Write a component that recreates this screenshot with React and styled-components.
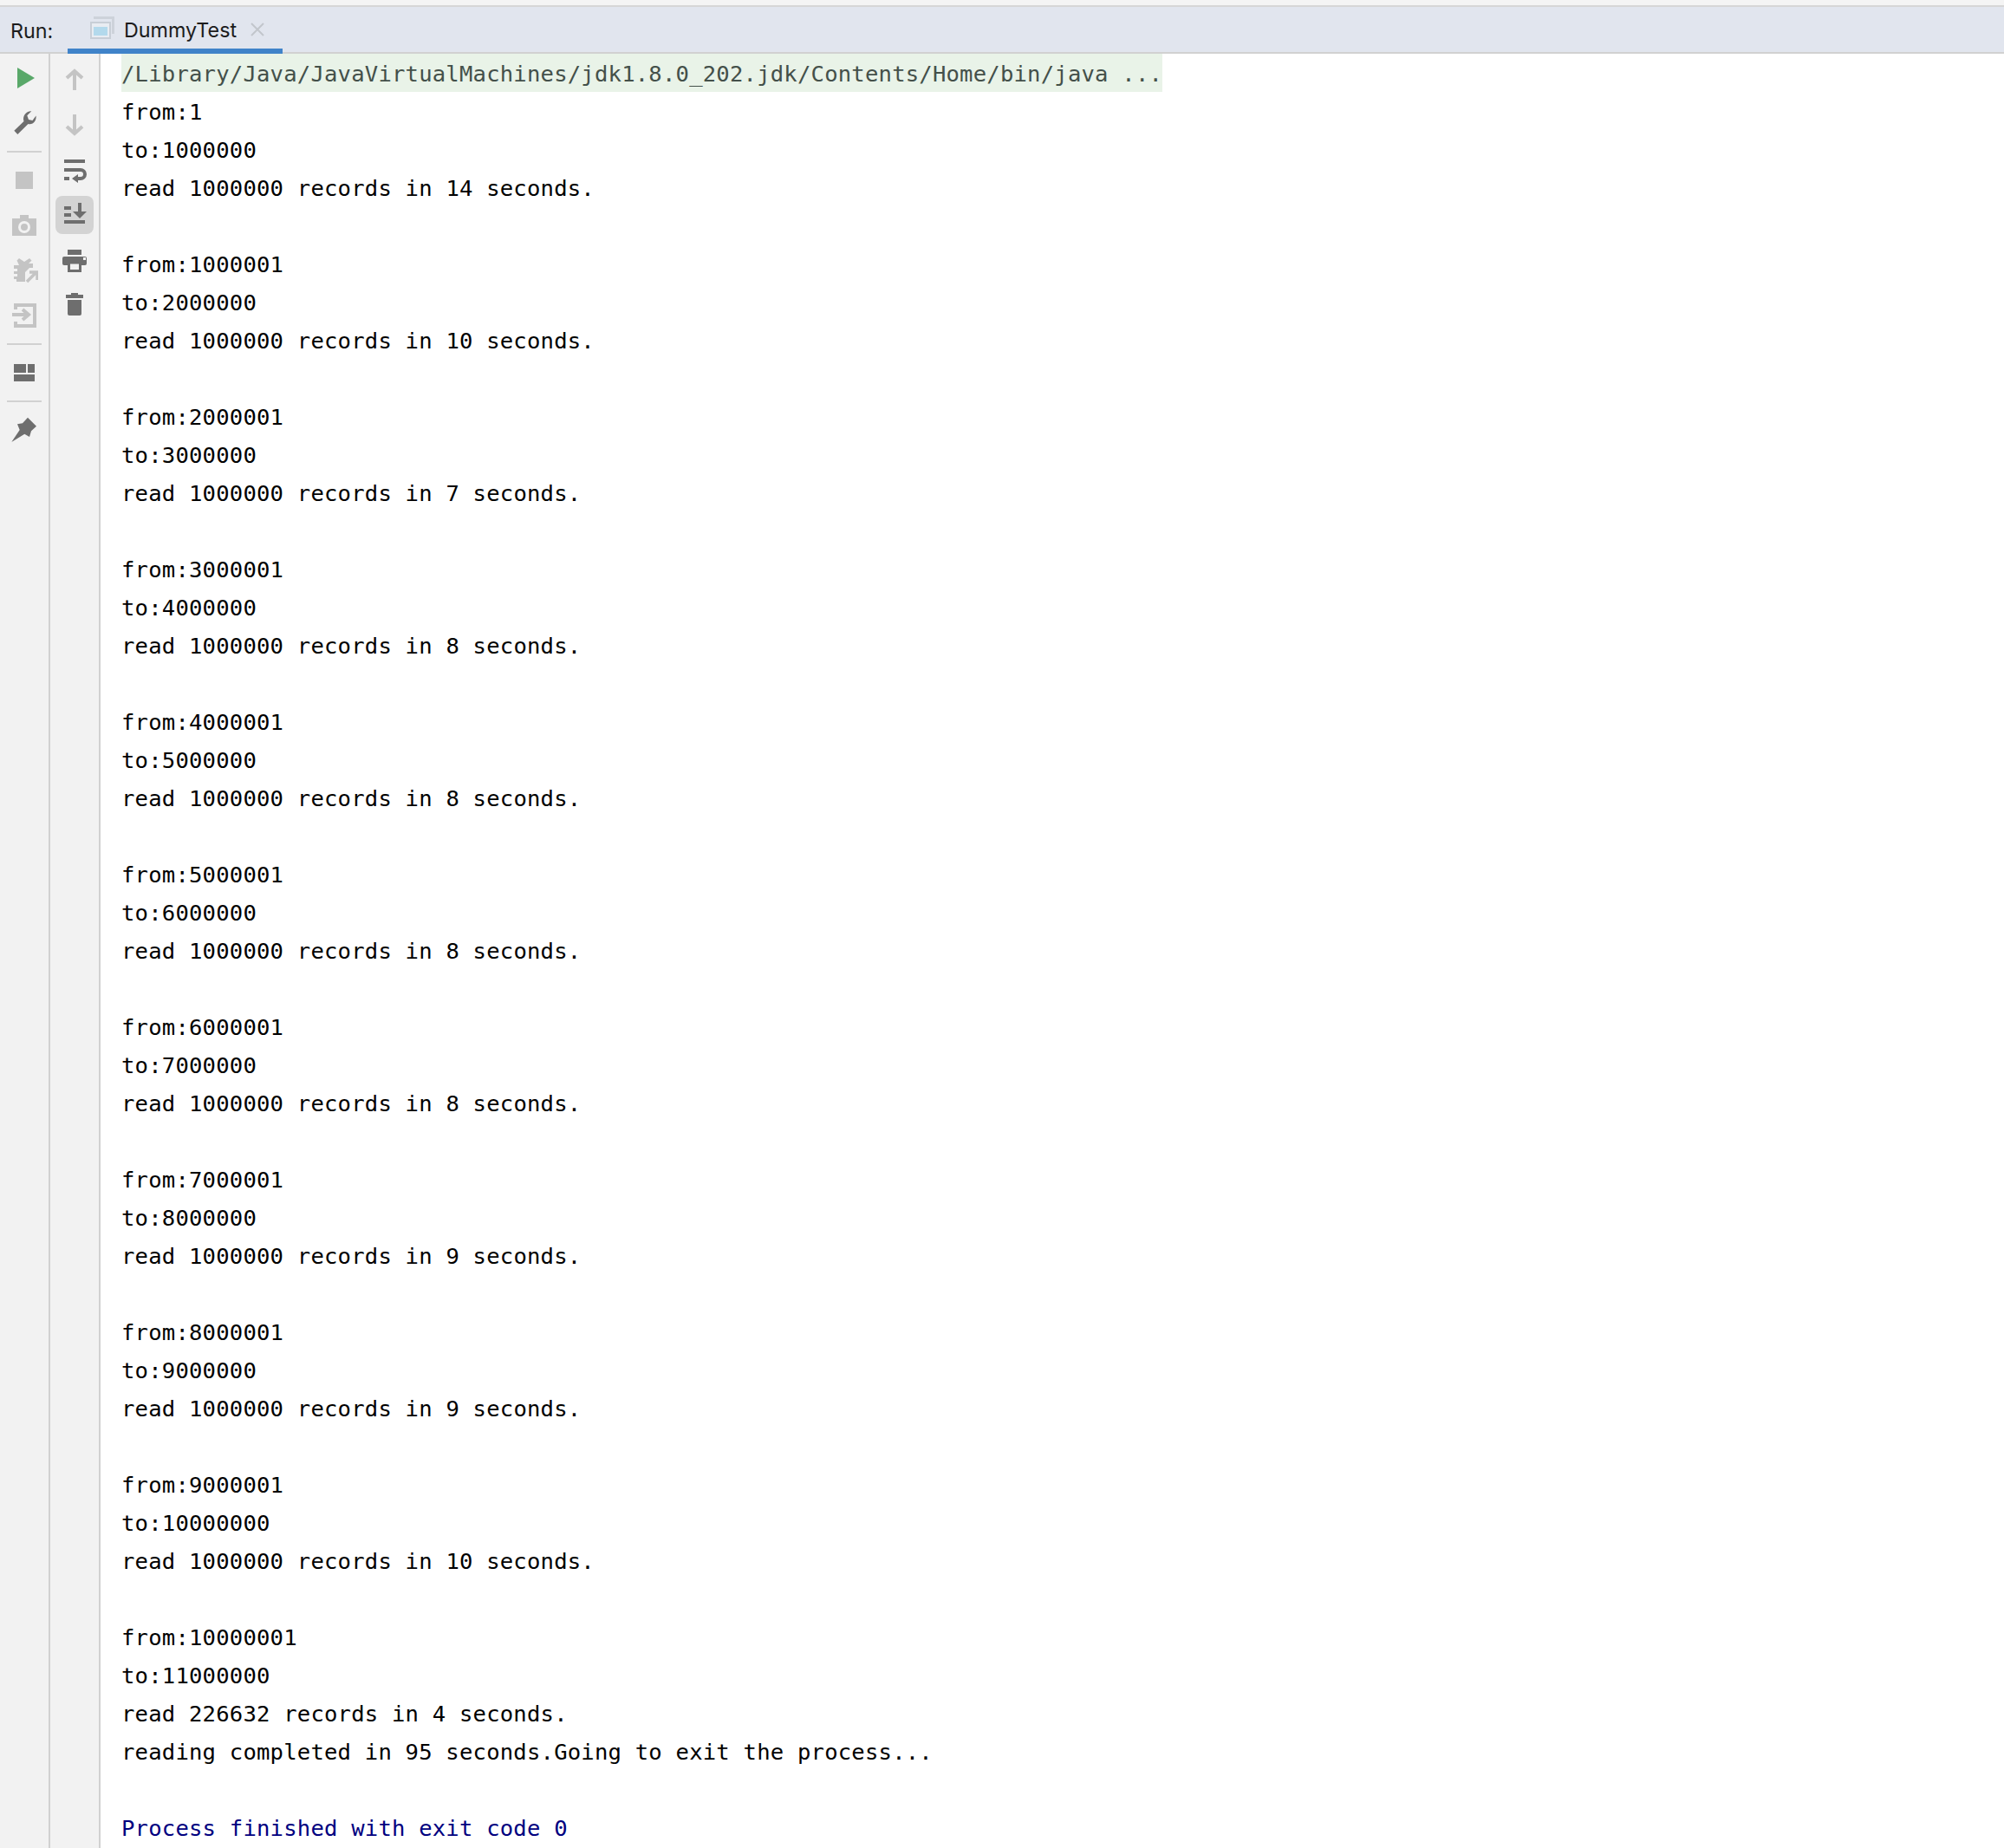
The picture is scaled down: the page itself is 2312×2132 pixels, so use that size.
import React from "react";
import styled, { createGlobalStyle } from "styled-components";

const GlobalStyle = createGlobalStyle`
  html, body {
    margin: 0;
    padding: 0;
    height: 100%;
    background: #fff;
    overflow: hidden;
  }
  #root {
    height: 100%;
  }
`;

const Page = styled.div`
  height: 100vh;
  display: flex;
  flex-direction: column;
`;

const TopStrip = styled.div`
  height: 6px;
  background: #f4f4f4;
  border-bottom: 2px solid #d6d6d6;
  flex: none;
`;

const TabBar = styled.div`
  height: 52px;
  flex: none;
  display: flex;
  background: #e1e5ee;
  border-bottom: 2px solid #d1d1d1;
  font-family: Inter, "Liberation Sans", sans-serif;
  font-size: 23.3px;
  color: #1c1c1c;
`;

const RunLabel = styled.div`
  width: 78px;
  padding-left: 12px;
  box-sizing: border-box;
  line-height: 55px;
`;

const Tab = styled.div`
  width: 248px;
  height: 54px;
  box-sizing: border-box;
  border-bottom: 6px solid #4083c9;
  display: flex;
  align-items: center;
  padding-left: 26px;
`;

const TabTitle = styled.span`
  margin: 4px 0 0 11px;
`;

const CloseIcon = styled.svg`
  margin: 4px 0 0 16px;
`;

const Body = styled.div`
  flex: 1;
  display: flex;
  min-height: 0;
`;

const Rail = styled.div`
  width: 58px;
  flex: none;
  box-sizing: border-box;
  background: #f2f2f2;
  border-right: 2px solid #d1d1d1;
  display: flex;
  flex-direction: column;
  align-items: center;
  padding-top: ${(p) => p.$top}px;
`;

const Slot = styled.div`
  width: 44px;
  height: 44px;
  margin: 4px 0;
  flex: none;
  display: flex;
  align-items: center;
  justify-content: center;
  border-radius: 8px;
  background: ${(p) => (p.$active ? "#d3d3d3" : "transparent")};
`;

const Separator = styled.div`
  width: 40px;
  height: 2px;
  margin: 6px 0;
  flex: none;
  background: #d1d1d1;
`;

const Console = styled.div`
  flex: 1;
  padding-left: 24px;
  font-family: "DejaVu Sans Mono", "Liberation Mono", monospace;
  font-size: 25.6px;
  letter-spacing: 0.19px;
  line-height: 46px;
  color: #000;
  white-space: pre;
`;

const Line = styled.div`
  height: 44px;
`;

const CommandLine = styled.div`
  width: 1201px;
  height: 44px;
  background: #e9f3e8;
  color: #44504a;
`;

const ExitLine = styled(Line)`
  color: #000080;
`;

const Icon = ({ children }) => (
  <svg width="32" height="32" viewBox="0 0 32 32">
    {children}
  </svg>
);

const DARK = "#6e6e6e";
const LIGHT = "#c4c4c4";

const blocks = [
  ["1", "1000000", "14"],
  ["1000001", "2000000", "10"],
  ["2000001", "3000000", "7"],
  ["3000001", "4000000", "8"],
  ["4000001", "5000000", "8"],
  ["5000001", "6000000", "8"],
  ["6000001", "7000000", "8"],
  ["7000001", "8000000", "9"],
  ["8000001", "9000000", "9"],
  ["9000001", "10000000", "10"],
];

export default function App() {
  return (
    <Page>
      <GlobalStyle />
      <TopStrip />
      <TabBar>
        <RunLabel>Run:</RunLabel>
        <Tab>
          <svg width="28" height="26" viewBox="0 0 28 26">
            <path d="M4 0H28V20H25V3H4Z" fill="#cdd2da" />
            <rect x="0" y="6" width="24" height="20" fill="#c8ced6" />
            <rect x="2" y="8" width="20" height="16" fill="#e8ecf2" />
            <rect x="4" y="12" width="16" height="10" fill="#b3d9ec" />
          </svg>
          <TabTitle>DummyTest</TabTitle>
          <CloseIcon width="16" height="16" viewBox="0 0 16 16">
            <path d="M1 1L15 15M15 1L1 15" stroke="#c2c6cc" strokeWidth="2" />
          </CloseIcon>
        </Tab>
      </TabBar>
      <Body>
        <Rail $top={2}>
          <Slot>
            <Icon>
              <path d="M8 4L28 16L8 28Z" fill="#59a869" />
            </Icon>
          </Slot>
          <Slot>
            <Icon>
              <path d="M4.3 24.7L15.5 14C13.5 8 18 2 24.3 2.3L19.3 7.3L21 12L25.5 13L29.5 7.5C30.5 13 26 18.5 20.5 17L8.3 29Z" fill={DARK} />
            </Icon>
          </Slot>
          <Separator />
          <Slot>
            <Icon>
              <rect x="6" y="6" width="20" height="20" fill={LIGHT} />
            </Icon>
          </Slot>
          <Slot>
            <Icon>
              <path d="M11 4H21V8H30V28H2V8H11Z" fill={LIGHT} />
              <circle cx="16" cy="18" r="7" fill="#f2f2f2" />
              <circle cx="16" cy="18" r="4" fill={LIGHT} />
            </Icon>
          </Slot>
          <Slot>
            <Icon>
              <path d="M10 2L16 6L22 2L24.5 4.5L21 8H26V13H22L17 18V29H7V26H4V23H8V20H4V17H8V14H4V10H10L7.5 4.5Z" fill={LIGHT} />
              <path d="M19 29L29 19M22 18H31V27" fill="none" stroke="#f2f2f2" strokeWidth="6" />
              <path d="M19 29L29 19M22 18H31V27" fill="none" stroke={LIGHT} strokeWidth="3.5" />
            </Icon>
          </Slot>
          <Slot>
            <Icon>
              <path d="M6 9V4H28V28H6V23" fill="none" stroke={LIGHT} strokeWidth="4" />
              <path d="M2 15H18M14 9L21 15L14 21" fill="none" stroke={LIGHT} strokeWidth="4" />
            </Icon>
          </Slot>
          <Separator />
          <Slot>
            <Icon>
              <rect x="4" y="6" width="14" height="10" fill={DARK} />
              <rect x="20" y="6" width="8" height="10" fill={DARK} />
              <rect x="4" y="18" width="24" height="8" fill={DARK} />
            </Icon>
          </Slot>
          <Separator />
          <Slot>
            <Icon>
              <path d="M1.3 30L10.7 16L8 9.3L14 8.3L20 1.7L30 11.7L24 17.3L22 24L16.3 20.7Z" fill={DARK} />
            </Icon>
          </Slot>
        </Rail>
        <Rail $top={4}>
          <Slot>
            <Icon>
              <path d="M7 14L16 6L25 14M16 7V28" fill="none" stroke={LIGHT} strokeWidth="4" />
            </Icon>
          </Slot>
          <Slot>
            <Icon>
              <path d="M7 18L16 26L25 18M16 25V4" fill="none" stroke={LIGHT} strokeWidth="4" />
            </Icon>
          </Slot>
          <Slot>
            <Icon>
              <path d="M4 6H28M4 16H23A5 5 0 0 1 23 26H17" fill="none" stroke={DARK} strokeWidth="4" />
              <path d="M4 24H10V28H4ZM20 21V31L13 26Z" fill={DARK} />
            </Icon>
          </Slot>
          <Slot $active>
            <Icon>
              <path d="M4 6H12V10H4ZM4 14H12V18H4ZM4 22H28V26H4ZM20 2H24V12H30L22 20L14 12H20Z" fill={DARK} />
            </Icon>
          </Slot>
          <Slot>
            <Icon>
              <rect x="8" y="4" width="16" height="6" fill={DARK} />
              <rect x="2" y="12" width="28" height="10" rx="2" fill={DARK} />
              <rect x="9.5" y="19" width="13" height="9.5" fill="#f2f2f2" stroke={DARK} strokeWidth="3" />
              <rect x="26" y="13" width="3" height="3" fill="#f2f2f2" />
            </Icon>
          </Slot>
          <Slot>
            <Icon>
              <path d="M12 2H20V4H26V8H6V4H12ZM8 10H24V26A2 2 0 0 1 22 28H10A2 2 0 0 1 8 26Z" fill={DARK} />
            </Icon>
          </Slot>
        </Rail>
        <Console>
          <CommandLine>/Library/Java/JavaVirtualMachines/jdk1.8.0_202.jdk/Contents/Home/bin/java ...</CommandLine>
          {blocks.map(([from, to, secs]) => (
            <React.Fragment key={from}>
              <Line>from:{from}</Line>
              <Line>to:{to}</Line>
              <Line>read 1000000 records in {secs} seconds.</Line>
              <Line />
            </React.Fragment>
          ))}
          <Line>from:10000001</Line>
          <Line>to:11000000</Line>
          <Line>read 226632 records in 4 seconds.</Line>
          <Line>reading completed in 95 seconds.Going to exit the process...</Line>
          <Line />
          <ExitLine>Process finished with exit code 0</ExitLine>
        </Console>
      </Body>
    </Page>
  );
}
